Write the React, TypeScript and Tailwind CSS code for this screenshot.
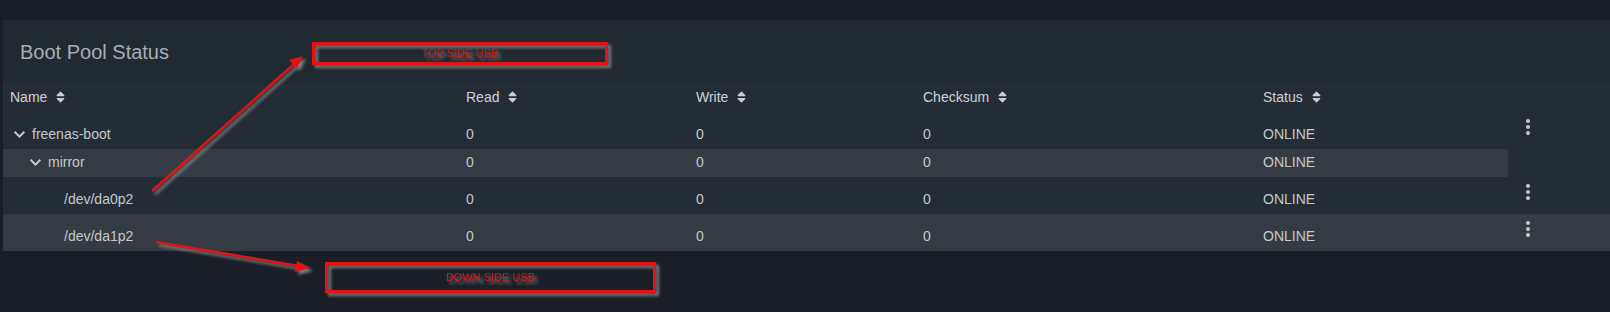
import React from "react";

type Row = {
  name: string;
  level: number;
  expand?: boolean;
  menu: boolean;
  stripe: "none" | "partial" | "full";
  tall: boolean;
};

const rows: Row[] = [
  { name: "freenas-boot", level: 0, expand: true, menu: true, stripe: "none", tall: true },
  { name: "mirror", level: 1, expand: true, menu: false, stripe: "partial", tall: false },
  { name: "/dev/da0p2", level: 2, menu: true, stripe: "none", tall: true },
  { name: "/dev/da1p2", level: 2, menu: true, stripe: "full", tall: true },
];

const cols = ["Name", "Read", "Write", "Checksum", "Status"];

function SortIcon() {
  return (
    <svg width="9" height="14" viewBox="0 0 320 512" className="ml-[9px] shrink-0" fill="#c9cdd1">
      <path d="M41 288h238c21.4 0 32.1 25.9 17 41L177 448c-9.4 9.4-24.6 9.4-33.9 0L24 329c-15.1-15.1-4.4-41 17-41zm255-105L177 64c-9.4-9.4-24.6-9.4-33.9 0L24 183c-15.1 15.1-4.4 41 17 41h238c21.4 0 32.1-25.9 17-41z" />
    </svg>
  );
}

function Chevron() {
  return (
    <svg width="11" height="7" viewBox="6 8.59 12 7.41" className="shrink-0" fill="#c9cdd1">
      <path d="M16.59 8.59L12 13.17 7.41 8.59 6 10l6 6 6-6z" />
    </svg>
  );
}

function MoreVert() {
  return (
    <svg width="24" height="24" viewBox="0 0 24 24" fill="#c8cbce">
      <circle cx="12" cy="6" r="2" />
      <circle cx="12" cy="12" r="2" />
      <circle cx="12" cy="18" r="2" />
    </svg>
  );
}

export default function App() {
  return (
    <div className="relative h-[312px] w-full overflow-hidden bg-[#1a1f27] pt-[20px] pl-[3px] font-['Liberation_Sans',Arial,sans-serif]">
      <div className="flex flex-col bg-[#242c35]">
        <div className="flex h-[64px] items-center bg-[#212931] px-[17px]">
          <h2 className="text-[20px] leading-[24px] text-[#a9aeb3]">Boot Pool Status</h2>
        </div>

        {/* header */}
        <div className="flex h-[28px] text-[14px] leading-[16px] text-[#ced2d6]">
          <div className="grid w-[1505px] grid-cols-[456px_230px_227px_340px_1fr] items-start pl-[7px] pt-[5px]">
            {cols.map((c) => (
              <div key={c} className="flex h-[16px] items-center">
                <span>{c}</span>
                <SortIcon />
              </div>
            ))}
          </div>
          <div className="flex-1" />
        </div>

        {rows.map((r) => (
          <div
            key={r.name}
            className={`flex text-[14px] leading-[16px] text-[#c6c9cc] ${r.tall ? "h-[37px]" : "h-[28px]"} ${
              r.stripe === "full" ? "bg-[#343b42]" : ""
            }`}
          >
            <div
              className={`grid w-[1505px] grid-cols-[456px_230px_227px_340px_1fr] items-start pl-[7px] ${
                r.tall ? "pt-[14px]" : "pt-[5px]"
              } ${r.stripe === "partial" ? "bg-[#343b42]" : ""}`}
            >
              <div
                className={`flex h-[16px] items-center ${
                  r.level === 0 ? "pl-[4px]" : r.level === 1 ? "pl-[20px]" : "pl-[54px]"
                }`}
              >
                {r.expand && <Chevron />}
                <span className={r.expand ? "ml-[7px]" : ""}>{r.name}</span>
              </div>
              <div>0</div>
              <div>0</div>
              <div>0</div>
              <div>ONLINE</div>
            </div>
            <div className="flex-1 pl-[8px] pt-[3px]">{r.menu && <MoreVert />}</div>
          </div>
        ))}
      </div>

      {/* annotations */}
      <div className="absolute left-[312px] top-[42px] flex h-[23px] w-[296px] items-center justify-center border-[3px] border-[#e41212] [filter:drop-shadow(3px_3px_1.5px_rgba(140,140,140,0.85))]">
        <span className="text-[11px] leading-[13px] text-[#d81818]">TOP SIDE USB</span>
      </div>
      <div className="absolute left-[325px] top-[262px] flex h-[31px] w-[331px] items-center justify-center border-[3px] border-[#e41212] [filter:drop-shadow(3px_3px_1.5px_rgba(140,140,140,0.85))]">
        <span className="text-[11px] leading-[13px] text-[#d81818]">DOWN SIDE USB</span>
      </div>

      <svg
        className="pointer-events-none absolute inset-0 [filter:drop-shadow(3px_3px_1.5px_rgba(140,140,140,0.85))]"
        width="1610"
        height="312"
      >
        <line x1="152" y1="191" x2="294" y2="64" stroke="#e41212" strokeWidth="2.5" />
        <polygon points="303,56 289,60 297,68" fill="#e41212" />
        <line x1="156" y1="242" x2="299" y2="266" stroke="#e41212" strokeWidth="2.5" />
        <polygon points="310,268 297,261 295,272" fill="#e41212" />
      </svg>
    </div>
  );
}
